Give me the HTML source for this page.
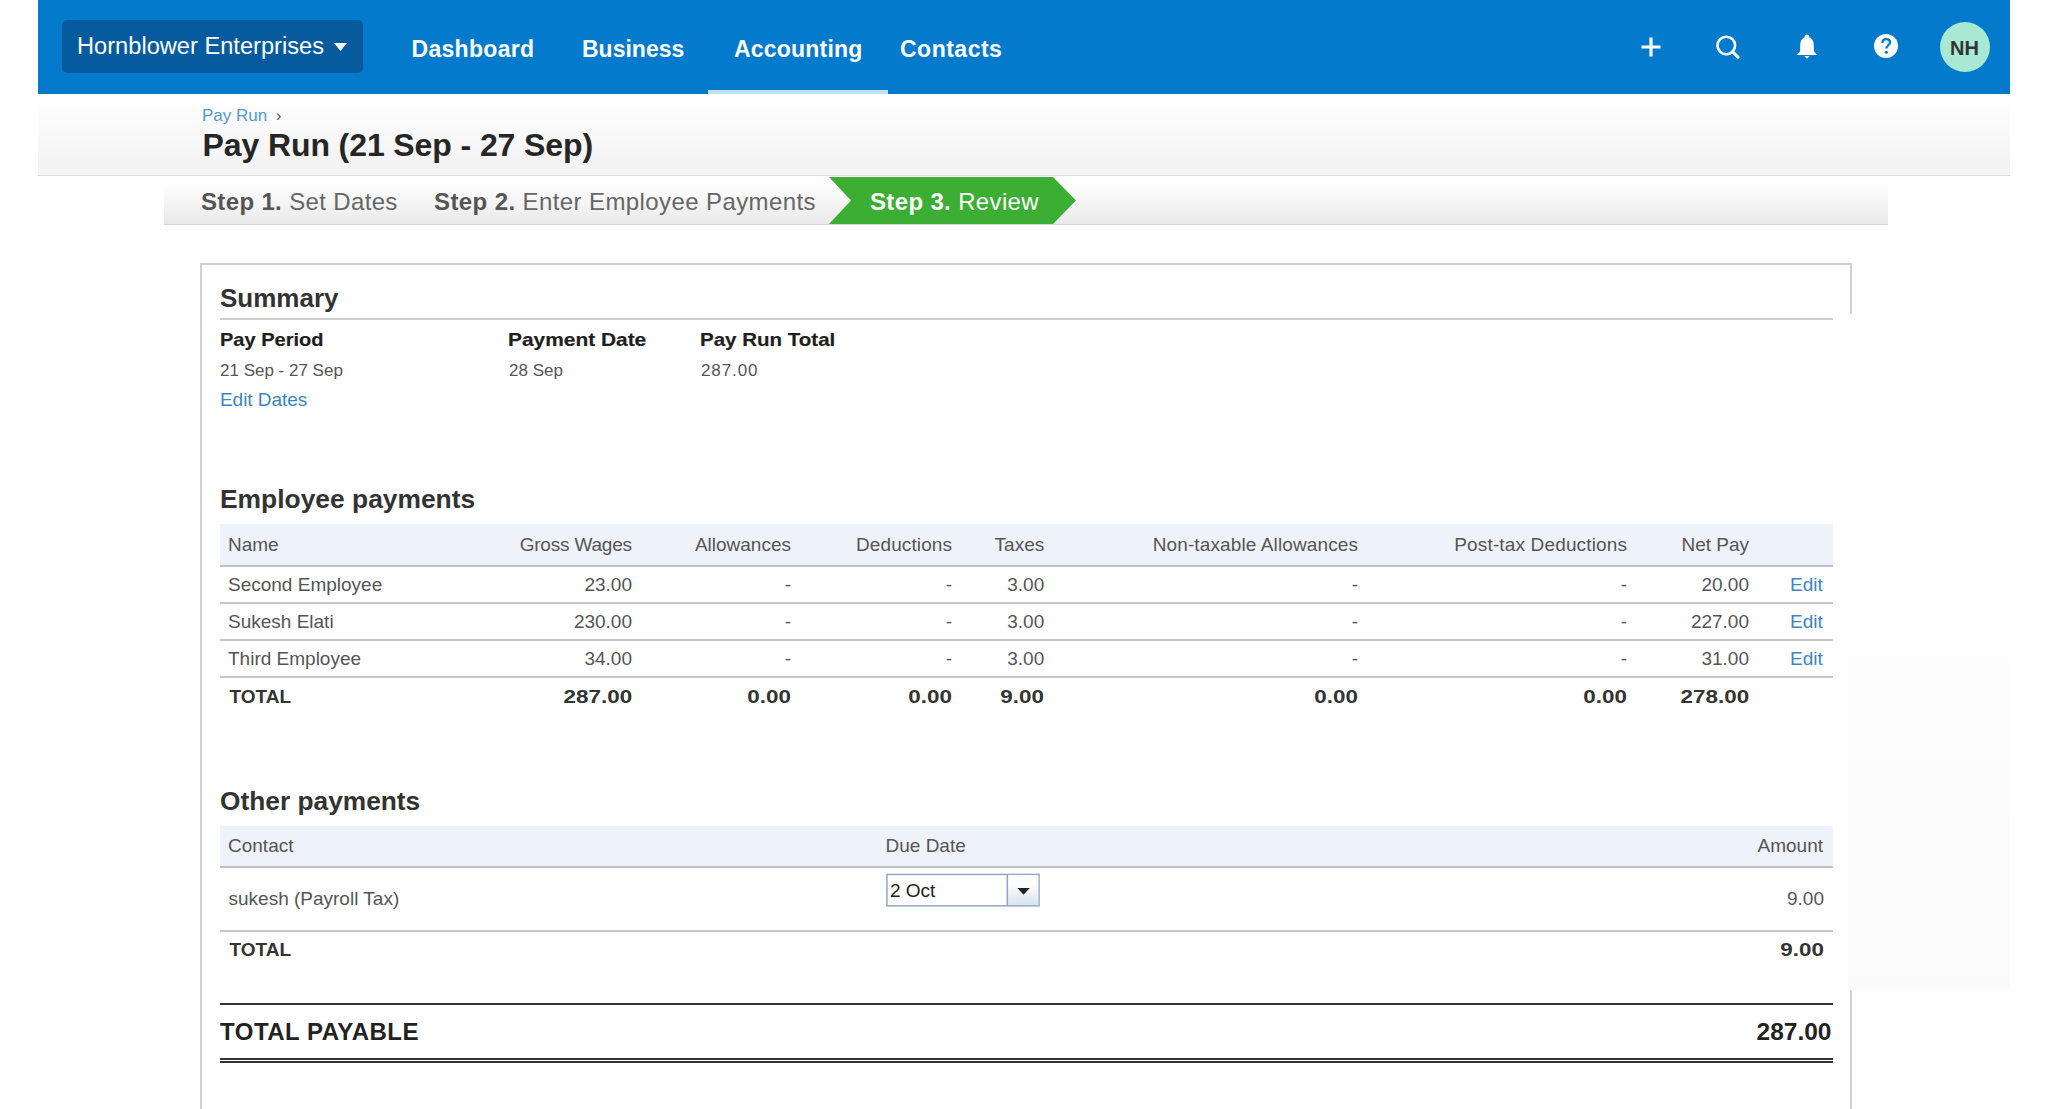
<!DOCTYPE html>
<html>
<head>
<meta charset="utf-8">
<style>
html,body{margin:0;padding:0;}
body{width:2048px;height:1109px;overflow:hidden;background:#fff;position:relative;font-family:"Liberation Sans",sans-serif;}
.a{position:absolute;line-height:1;white-space:pre;}
.b{font-weight:700;}
#nav{position:absolute;left:38px;top:0;width:1972px;height:94px;background:#037acc;}
#org{position:absolute;left:62px;top:20px;width:301px;height:53px;border-radius:5px;background:#055b9d;}
.nl{color:#fff;font-size:23px;font-weight:700;}
#uline{position:absolute;left:708px;top:90px;width:180px;height:4px;background:#bfe2f6;}
#phead{position:absolute;left:38px;top:94px;width:1972px;height:80.5px;background:linear-gradient(#fff 5%,#f4f4f4 80%);border-bottom:1.5px solid #dddddd;}
#steps{position:absolute;left:164px;top:176px;width:1724px;height:48px;background:linear-gradient(#fff 15%,#e9e9e9);border-bottom:1.5px solid #d6d6d6;}
.st{font-size:24px;color:#666;letter-spacing:0.35px;}
.st b{color:#555;}
#box{position:absolute;left:200px;top:263px;width:1648px;height:900px;border:2px solid #d2d2d2;border-bottom:none;}
#gap{position:absolute;left:1846px;top:314px;width:10px;height:676px;background:#fff;}
#patch{position:absolute;left:1848px;top:545px;width:162px;height:445px;background:linear-gradient(#fefefe,#fcfcfc 75%,#fafafa);}
.h2{font-size:26px;font-weight:700;color:#333;}
.lab{font-size:19px;font-weight:700;color:#1e1e1e;transform-origin:left;-webkit-text-stroke:0.2px #1e1e1e;}
.val{font-size:17px;color:#555;}
.a.lnk{color:#3d85c2;}
.th{position:absolute;left:220px;width:1613px;background:#eef2fa;border-bottom:2px solid #bec2c7;}
.rb{position:absolute;left:220px;width:1613px;height:2px;background:#c6c6c6;}
.td{font-size:19px;color:#555;}
.tot{font-size:19px;font-weight:700;color:#333;}
.r{text-align:right;}
</style>
</head>
<body>
<!-- NAV -->
<div id="nav"></div>
<div id="org"></div>
<div class="a" style="left:77px;top:34.5px;font-size:23.65px;color:#fff;">Hornblower Enterprises</div>
<svg style="position:absolute;left:333px;top:42px" width="15" height="10"><path d="M1 1 L14 1 L7.5 9 Z" fill="#fff"/></svg>
<div class="a nl" style="left:411.5px;top:37.5px;letter-spacing:0.3px;">Dashboard</div>
<div class="a nl" style="left:582px;top:37.5px;letter-spacing:0px;">Business</div>
<div class="a nl" style="left:734px;top:37.5px;letter-spacing:0.2px;">Accounting</div>
<div class="a nl" style="left:900px;top:37.5px;letter-spacing:0.5px;">Contacts</div>
<div id="uline"></div>

<!-- icons -->
<svg style="position:absolute;left:1636px;top:32px" width="30" height="30" viewBox="0 0 30 30">
  <path d="M15 5.5 V24.5 M5.5 15 H24.5" stroke="#fff" stroke-width="3.2" fill="none"/>
</svg>
<svg style="position:absolute;left:1711px;top:30px" width="34" height="34" viewBox="0 0 34 34">
  <circle cx="15.3" cy="15.5" r="8.8" stroke="#fff" stroke-width="2.6" fill="none"/>
  <path d="M21.5 21.6 L27 27.1" stroke="#fff" stroke-width="3.1" stroke-linecap="round"/>
</svg>
<svg style="position:absolute;left:1792px;top:32px" width="30" height="30" viewBox="0 0 30 30">
  <circle cx="15" cy="4.8" r="2.3" fill="#fff"/>
  <path d="M15 5 C9.5 5 8.2 9.5 8.2 14 L8.2 18 C8.2 20 6 21.5 4.5 23 L25.5 23 C24 21.5 21.8 20 21.8 18 L21.8 14 C21.8 9.5 20.5 5 15 5 Z" fill="#fff"/>
  <path d="M12.3 24 L17.7 24 L15 26.8 Z" fill="#fff"/>
</svg>
<svg style="position:absolute;left:1871px;top:31px" width="30" height="30" viewBox="0 0 30 30">
  <circle cx="15" cy="15" r="12" fill="#fff"/>
  <path d="M11.4 11.9 C11.4 9.5 13.1 8.1 15.2 8.1 C17.4 8.1 19 9.5 19 11.4 C19 14.1 15.4 14.5 15.4 17.6" stroke="#037acc" stroke-width="2.3" fill="none"/>
  <circle cx="15.4" cy="21.2" r="1.55" fill="#037acc"/>
</svg>
<div style="position:absolute;left:1940px;top:22px;width:50px;height:50px;border-radius:50%;background:#a9e9d3;"></div>
<div class="a b" style="left:1950px;top:38px;font-size:20px;color:#333;">NH</div>

<!-- page header -->
<div id="phead"></div>
<div class="a" style="left:202px;top:107px;font-size:17px;color:#5598cf;">Pay Run <span style="color:#555;font-size:16px;margin-left:4px;">›</span></div>
<div class="a b" style="left:202.5px;top:129px;font-size:32px;color:#262626;letter-spacing:-0.1px;">Pay Run (21 Sep - 27 Sep)</div>

<!-- steps -->
<div id="steps"></div>
<svg style="position:absolute;left:0;top:0" width="2048" height="240"><polygon points="829,177 1053,177 1076,200.5 1053,224 829,224 851,200.5" fill="#3bae33"/></svg>
<div class="a st" style="left:201px;top:190px;"><b>Step 1.</b> Set Dates</div>
<div class="a st" style="left:434px;top:190px;letter-spacing:0.4px;"><b>Step 2.</b> Enter Employee Payments</div>
<div class="a st" style="left:870px;top:190px;color:#fff;"><b style="color:#fff">Step 3.</b> Review</div>

<!-- box -->
<div id="box"></div>
<div id="gap"></div>
<div id="patch"></div>
<div class="a h2" style="left:220px;top:285px;">Summary</div>
<div style="position:absolute;left:220px;top:318px;width:1613px;height:1.5px;background:#cfcfcf;"></div>
<div class="a lab" style="left:220px;top:330px;transform:scaleX(1.055);">Pay Period</div>
<div class="a lab" style="left:508px;top:330px;transform:scaleX(1.1);">Payment Date</div>
<div class="a lab" style="left:700px;top:330px;transform:scaleX(1.08);">Pay Run Total</div>
<div class="a val" style="left:220px;top:362px;">21 Sep - 27 Sep</div>
<div class="a val" style="left:509px;top:362px;">28 Sep</div>
<div class="a val" style="left:701px;top:362px;letter-spacing:0.9px;">287.00</div>
<div class="a val lnk" style="left:220px;top:390px;font-size:19px;letter-spacing:-0.05px;">Edit Dates</div>

<!-- employee payments -->
<div class="a h2" style="left:220px;top:486px;font-size:26.4px;">Employee payments</div>
<div class="th" style="top:524px;height:41px;"></div>
<!--T-->
<div class="a td" style="left:228px;top:535px;">Name</div>
<div class="a td" style="right:1416.2px;top:535px;letter-spacing:-0.2px;">Gross Wages</div>
<div class="a td" style="right:1257px;top:535px;">Allowances</div>
<div class="a td" style="right:1095.9px;top:535px;letter-spacing:0.1px;">Deductions</div>
<div class="a td" style="right:1003.8px;top:535px;">Taxes</div>
<div class="a td" style="right:689.8800000000001px;top:535px;letter-spacing:0.12px;">Non-taxable Allowances</div>
<div class="a td" style="right:420.8499999999999px;top:535px;letter-spacing:0.15px;">Post-tax Deductions</div>
<div class="a td" style="right:299px;top:535px;">Net Pay</div>
<div class="a td" style="left:228px;top:575px;">Second Employee</div>
<div class="a td" style="right:1416px;top:575px;">23.00</div>
<div class="a td" style="right:1257px;top:575px;">-</div>
<div class="a td" style="right:1096px;top:575px;">-</div>
<div class="a td" style="right:1003.8px;top:575px;">3.00</div>
<div class="a td" style="right:690px;top:575px;">-</div>
<div class="a td" style="right:421px;top:575px;">-</div>
<div class="a td" style="right:299px;top:575px;">20.00</div>
<div class="a td lnk" style="left:1790px;top:575px;">Edit</div>
<div class="a td" style="left:228px;top:612px;">Sukesh Elati</div>
<div class="a td" style="right:1416px;top:612px;">230.00</div>
<div class="a td" style="right:1257px;top:612px;">-</div>
<div class="a td" style="right:1096px;top:612px;">-</div>
<div class="a td" style="right:1003.8px;top:612px;">3.00</div>
<div class="a td" style="right:690px;top:612px;">-</div>
<div class="a td" style="right:421px;top:612px;">-</div>
<div class="a td" style="right:299px;top:612px;">227.00</div>
<div class="a td lnk" style="left:1790px;top:612px;">Edit</div>
<div class="a td" style="left:228px;top:649px;">Third Employee</div>
<div class="a td" style="right:1416px;top:649px;">34.00</div>
<div class="a td" style="right:1257px;top:649px;">-</div>
<div class="a td" style="right:1096px;top:649px;">-</div>
<div class="a td" style="right:1003.8px;top:649px;">3.00</div>
<div class="a td" style="right:690px;top:649px;">-</div>
<div class="a td" style="right:421px;top:649px;">-</div>
<div class="a td" style="right:299px;top:649px;">31.00</div>
<div class="a td lnk" style="left:1790px;top:649px;">Edit</div>
<div class="rb" style="top:602px;"></div>
<div class="rb" style="top:639px;"></div>
<div class="rb" style="top:676px;"></div>
<div class="a tot" style="left:229.5px;top:687px;">TOTAL</div>
<div class="a tot" style="right:1416px;top:687px;transform:scaleX(1.18);transform-origin:right;">287.00</div>
<div class="a tot" style="right:1257px;top:687px;transform:scaleX(1.18);transform-origin:right;">0.00</div>
<div class="a tot" style="right:1096px;top:687px;transform:scaleX(1.18);transform-origin:right;">0.00</div>
<div class="a tot" style="right:1003.8px;top:687px;transform:scaleX(1.18);transform-origin:right;">9.00</div>
<div class="a tot" style="right:690px;top:687px;transform:scaleX(1.18);transform-origin:right;">0.00</div>
<div class="a tot" style="right:421px;top:687px;transform:scaleX(1.18);transform-origin:right;">0.00</div>
<div class="a tot" style="right:299px;top:687px;transform:scaleX(1.18);transform-origin:right;">278.00</div>

<!-- other payments -->
<div class="a h2" style="left:220px;top:788px;font-size:26.3px;">Other payments</div>
<div class="th" style="top:826px;height:40px;"></div>
<div class="a td" style="left:228px;top:836px;">Contact</div>
<div class="a td" style="left:885.5px;top:836px;">Due Date</div>
<div class="a td" style="right:225px;top:836px;">Amount</div>
<div class="a td" style="left:228.5px;top:889px;">sukesh (Payroll Tax)</div>
<div class="a td" style="right:224px;top:889px;">9.00</div>
<div class="rb" style="top:930px;"></div>
<div class="a tot" style="left:229.5px;top:940px;">TOTAL</div>
<div class="a tot" style="right:224px;top:940px;transform:scaleX(1.18);transform-origin:right;">9.00</div>
<svg style="position:absolute;left:885px;top:873px" width="157" height="36" viewBox="0 0 157 36">
<defs><linearGradient id="gbtn" x1="0" y1="0" x2="0" y2="1"><stop offset="0.3" stop-color="#fdfdfd"/><stop offset="1" stop-color="#d9e3ed"/></linearGradient></defs>
<rect x="1.95" y="1.45" width="152.1" height="31.4" fill="#fff" stroke="#90a8bf" stroke-width="1.5"/>
<rect x="122.5" y="2.2" width="30.8" height="29.9" fill="url(#gbtn)"/>
<path d="M122.3 1.5 V32.9" stroke="#90a8bf" stroke-width="1.5"/>
<path d="M132.3 15 L144.8 15 L138.55 21.8 Z" fill="#222"/>
</svg>
<div class="a" style="left:890px;top:881px;font-size:19px;color:#222;">2 Oct</div>

<!-- total payable -->
<div style="position:absolute;left:220px;top:1003px;width:1613px;height:2px;background:#333;"></div>
<div class="a b" style="left:220px;top:1020px;font-size:24px;color:#222;letter-spacing:0.5px;">TOTAL PAYABLE</div>
<div class="a b" style="right:216.5px;top:1020px;font-size:24px;color:#222;transform:scaleX(1.02);transform-origin:right;">287.00</div>
<div style="position:absolute;left:220px;top:1058px;width:1613px;height:2px;background:#333;"></div>
<div style="position:absolute;left:220px;top:1061px;width:1613px;height:2px;background:#333;"></div>
<!--/T-->
</body>
</html>
